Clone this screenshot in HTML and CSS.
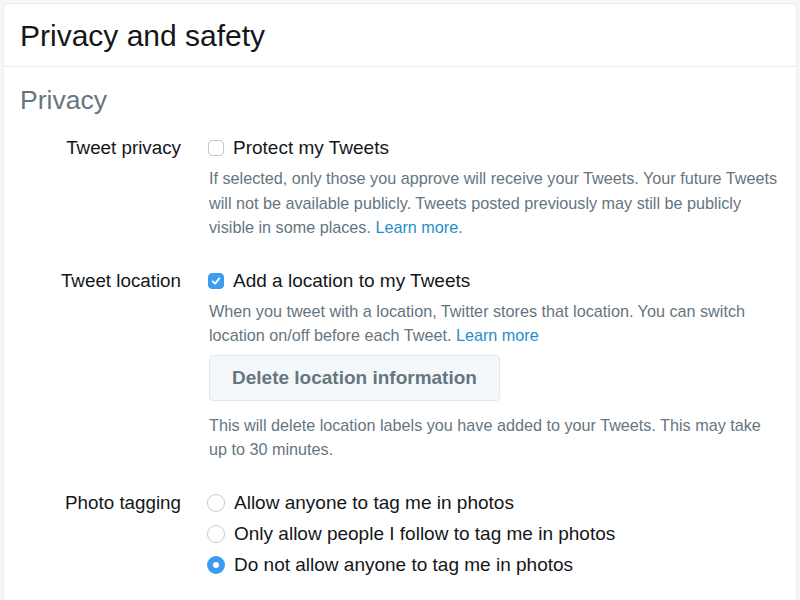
FILE: index.html
```html
<!DOCTYPE html>
<html lang="en">

<head>
    <meta charset="utf-8">
    <title>Privacy and safety</title>
    <link rel="stylesheet" href="styles.css">
</head>

<body>
    <div class="card">
        <div class="card-header">
            <h1>Privacy and safety</h1>
        </div>
        <div class="card-body">
            <h2 class="section-title">Privacy</h2>

            <!-- tweet privacy -->
            <div class="setting">
                <div class="setting-label">Tweet privacy</div>
                <div class="setting-controls">
                    <label class="option">
                        <span class="check"></span>
                        Protect my Tweets
                    </label>
                    <p class="help">If selected, only those you approve will receive your Tweets. Your future Tweets will not be available publicly. Tweets posted previously may still be publicly visible in some places. <a href="#">Learn more</a>.</p>
                </div>
            </div>

            <!-- tweet location -->
            <div class="setting">
                <div class="setting-label">Tweet location</div>
                <div class="setting-controls">
                    <label class="option">
                        <span class="check checked">
                            <svg viewBox="0 0 16 16" width="16" height="16">
                                <path d="M4.2 8.3 L7 11 L11.8 5" fill="none" stroke="#fff" stroke-width="2" stroke-linecap="round" stroke-linejoin="round" />
                            </svg>
                        </span>
                        Add a location to my Tweets
                    </label>
                    <p class="help">When you tweet with a location, Twitter stores that location. You can switch location on/off before each Tweet. <a href="#">Learn more</a></p>
                    <button class="btn">Delete location information</button>
                    <p class="help">This will delete location labels you have added to your Tweets. This may take up to 30 minutes.</p>
                </div>
            </div>

            <!-- photo tagging -->
            <div class="setting">
                <div class="setting-label">Photo tagging</div>
                <div class="setting-controls">
                    <label class="option radio-option">
                        <span class="radio"></span>
                        Allow anyone to tag me in photos
                    </label>
                    <label class="option radio-option">
                        <span class="radio"></span>
                        Only allow people I follow to tag me in photos
                    </label>
                    <label class="option radio-option">
                        <span class="radio selected"></span>
                        Do not allow anyone to tag me in photos
                    </label>
                </div>
            </div>
        </div>
    </div>
</body>

</html>
```

FILE: styles.css
```css
body {
    margin: 0;
    padding: 3px 3px 0 3px;
    background: #f5f8fa;
    font-family: "Liberation Sans", Arial, sans-serif;
    color: #14171a;
}

.card {
    background: #fff;
    border: 1px solid #e6ecf0;
    border-bottom: none;
    border-radius: 5px 5px 0 0;
    min-height: 600px;
}

.card-header {
    padding: 15px 16px 13px 16px;
    border-bottom: 1px solid #e6ecf0;
}

.card-header h1 {
    margin: 0;
    font-size: 30px;
    font-weight: normal;
    line-height: 34px;
}

.card-body {
    padding: 15px 14px 0 16px;
}

.section-title {
    margin: 0 0 17px 0;
    font-size: 26.5px;
    font-weight: normal;
    line-height: 36px;
    color: #66757f;
}

.setting {
    display: grid;
    grid-template-columns: 161px 1fr;
    column-gap: 27px;
    margin-bottom: 28px;
}

.setting-label {
    text-align: right;
    font-size: 18.8px;
    line-height: 26px;
}

.option {
    display: flex;
    align-items: center;
    gap: 9px;
    font-size: 19px;
    line-height: 26px;
    cursor: pointer;
}

.radio-option {
    margin-bottom: 5px;
}

.check {
    width: 14px;
    height: 14px;
    border: 1px solid #c4ccd2;
    border-radius: 4px;
    background: #fff;
    display: flex;
    align-items: center;
    justify-content: center;
    flex-shrink: 0;
}

.check.checked {
    border-color: #3d9cf2;
    background: #3d9cf2;
}

.radio {
    width: 18px;
    height: 18px;
    box-sizing: border-box;
    border: 1px solid #c4ccd2;
    border-radius: 50%;
    background: #fff;
    flex-shrink: 0;
    margin-left: -1px;
}

.radio.selected {
    border: 6px solid #3d9cf2;
}

.help {
    margin: 5px 0 0 1px;
    font-size: 16.2px;
    line-height: 24.5px;
    color: #66757f;
}

.help a {
    color: #1f8ecb;
    text-decoration: none;
}

.btn {
    margin: 7px 0 7px 1px;
    padding: 10px 22px;
    background: #f5f8fa;
    border: 1px solid #e1e8ed;
    border-radius: 4px;
    font-family: inherit;
    font-size: 19px;
    font-weight: bold;
    line-height: 24px;
    color: #66757f;
    cursor: pointer;
}
```
